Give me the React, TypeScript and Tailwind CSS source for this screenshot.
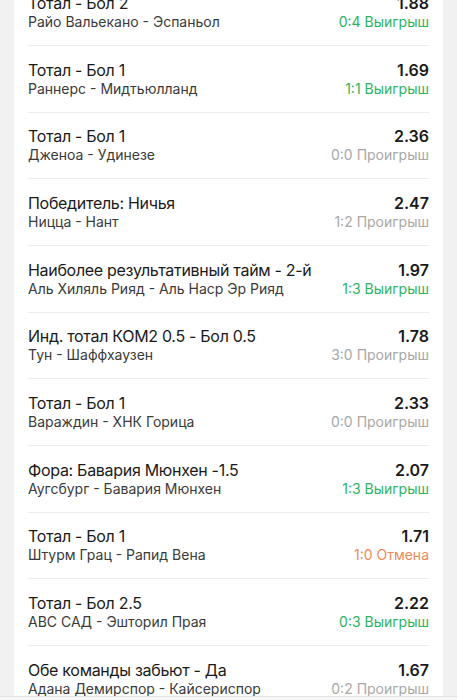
import React from "react";

type Bet = {
	title: string;
	match: string;
	odds: string;
	score: string;
	status: "win" | "lose" | "cancel";
};

const bets: Bet[] = [
	{ title: "Тотал - Бол 2", match: "Райо Вальекано - Эспаньол", odds: "1.88", score: "0:4", status: "win" },
	{ title: "Тотал - Бол 1", match: "Раннерс - Мидтьюлланд", odds: "1.69", score: "1:1", status: "win" },
	{ title: "Тотал - Бол 1", match: "Дженоа - Удинезе", odds: "2.36", score: "0:0", status: "lose" },
	{ title: "Победитель: Ничья", match: "Ницца - Нант", odds: "2.47", score: "1:2", status: "lose" },
	{ title: "Наиболее результативный тайм - 2-й", match: "Аль Хиляль Рияд - Аль Наср Эр Рияд", odds: "1.97", score: "1:3", status: "win" },
	{ title: "Инд. тотал КОМ2 0.5 - Бол 0.5", match: "Тун - Шаффхаузен", odds: "1.78", score: "3:0", status: "lose" },
	{ title: "Тотал - Бол 1", match: "Вараждин - ХНК Горица", odds: "2.33", score: "0:0", status: "lose" },
	{ title: "Фора: Бавария Мюнхен -1.5", match: "Аугсбург - Бавария Мюнхен", odds: "2.07", score: "1:3", status: "win" },
	{ title: "Тотал - Бол 1", match: "Штурм Грац - Рапид Вена", odds: "1.71", score: "1:0", status: "cancel" },
	{ title: "Тотал - Бол 2.5", match: "АВС САД - Эшторил Прая", odds: "2.22", score: "0:3", status: "win" },
	{ title: "Обе команды забьют - Да", match: "Адана Демирспор - Кайсериспор", odds: "1.67", score: "0:2", status: "lose" },
];

const statusLabel = {
	win: "Выигрыш",
	lose: "Проигрыш",
	cancel: "Отмена",
};

const statusColor = {
	win: "text-[#2eb35f]",
	lose: "text-[#a8a8a8]",
	cancel: "text-[#ee8a5c]",
};

function BetRow({ bet }: { bet: Bet }) {
	return (
		<div className="px-[14px]">
			<div className="flex h-[66.67px] items-center justify-between border-b border-[#ececec]">
				<div className="flex flex-col">
					<span className="text-[16px] leading-[20px] tracking-[-0.3px] text-[#1a1a1a]">{bet.title}</span>
					<span className="text-[14px] leading-[18px] text-[#3a3a3a]">{bet.match}</span>
				</div>
				<div className="flex flex-col items-end">
					<span className="text-[16px] font-semibold leading-[20px] text-[#1a1a1a]">{bet.odds}</span>
					<span className={`text-[14px] leading-[18px] ${statusColor[bet.status]}`}>
						{bet.score} {statusLabel[bet.status]}
					</span>
				</div>
			</div>
		</div>
	);
}

export default function App() {
	return (
		<div
			className="relative h-[700px] w-full overflow-hidden bg-[#f1f1f1]"
			style={{ fontFamily: "Inter, 'Noto Sans', sans-serif" }}
		>
			<div className="mx-[14px] -mt-[20.67px] bg-white">
				{bets.map((bet, i) => (
					<BetRow bet={bet} key={i} />
				))}
			</div>

			{/* bottom bar edge */}
			<div className="absolute bottom-0 left-0 right-0 h-[4px] border-t border-[#e2e2e2] bg-[#f6f6f6]" />
		</div>
	);
}
